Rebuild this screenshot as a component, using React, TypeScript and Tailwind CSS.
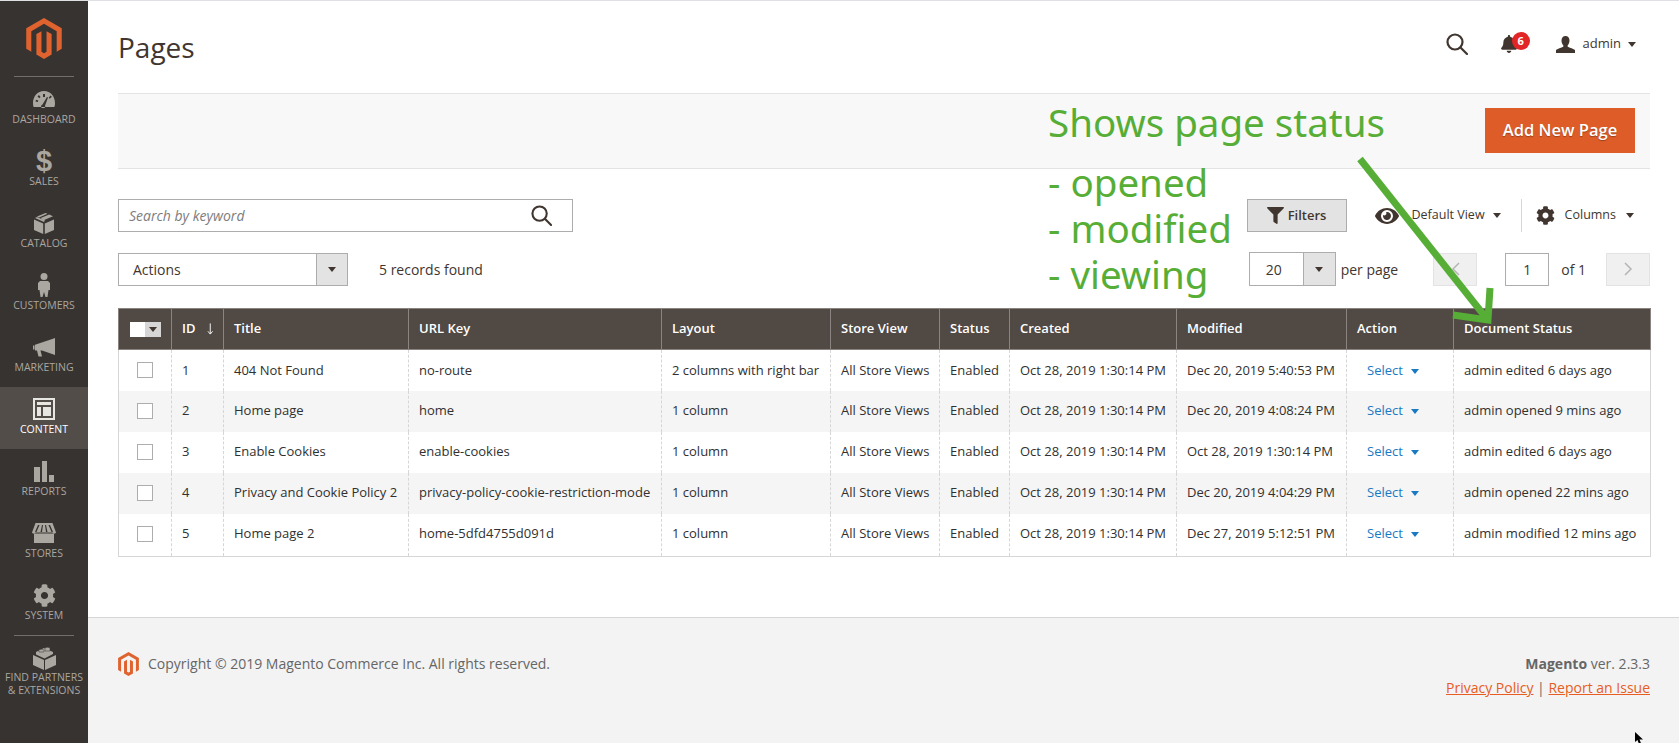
import { FaBell, FaCog, FaEye, FaFilter } from "react-icons/fa";

const MAGENTO =
  "M12 24l-4.455-2.572v-12l2.97-1.715v12.001l1.485.902 1.485-.902V7.713l2.971 1.715v12L12 24zM22.391 6v12l-2.969 1.714V7.713L12 3.43 4.574 7.713v12L1.609 18V6L12 0l10.391 6z";

const rows = [
  ["1", "404 Not Found", "no-route", "2 columns with right bar", "Dec 20, 2019 5:40:53 PM", "admin edited 6 days ago"],
  ["2", "Home page", "home", "1 column", "Dec 20, 2019 4:08:24 PM", "admin opened 9 mins ago"],
  ["3", "Enable Cookies", "enable-cookies", "1 column", "Oct 28, 2019 1:30:14 PM", "admin edited 6 days ago"],
  ["4", "Privacy and Cookie Policy 2", "privacy-policy-cookie-restriction-mode", "1 column", "Dec 20, 2019 4:04:29 PM", "admin opened 22 mins ago"],
  ["5", "Home page 2", "home-5dfd4755d091d", "1 column", "Dec 27, 2019 5:12:51 PM", "admin modified 12 mins ago"],
];

const nav = [
  {
    label: "Dashboard",
    icon: (
      <svg width="24" height="18" viewBox="0 0 24 18" fill="currentColor">
        <path fillRule="evenodd" d="M12 1C5.500 1 1 6.500 1 13c0 1.500.2 3 .7 4h20.600c.5-1 .7-2.500.7-4C23 6.500 18.500 1 12 1zM11 4h2v3h-2zM5.500 6.500l1.400-1.400 1.600 2-1.200 1.100zM3.500 11.500l.5-1.800 2.300.9-.5 1.500zM18.600 5.400l1.300 1.300-2.200 2-1-1zM10.500 14.500l4.500-7.500 1 .5-3 8.200a2 2 0 1 1-2.500-1.200z" />
      </svg>
    ),
  },
  {
    label: "Sales",
    icon: <span className="text-[29px] leading-none font-bold font-['Liberation_Sans',sans-serif]">$</span>,
  },
  {
    label: "Catalog",
    icon: (
      <svg width="20" height="21" viewBox="0 0 20 21" fill="currentColor">
        <path d="M0 6.500l9.200 4V21L0 17zM20 6.500l-9.200 4V21L20 17zM3 3.500L11.500 0l2 .8L5 4.400zM6.700 5L15.200 1.500 19 3.200l-8.800 3.700-1 .5z" />
        <path d="M1 5l2-1 8 3.500-1 1.500z" />
      </svg>
    ),
  },
  {
    label: "Customers",
    icon: (
      <svg width="12" height="24" viewBox="0 0 12 24" fill="currentColor">
        <circle cx="6" cy="3.500" r="3.500" />
        <path d="M2 8h8l2 2v7h-1.500l-1 7H7.500L6 19l-1.500 5h-2l-1-7H0v-7z" />
      </svg>
    ),
  },
  {
    label: "Marketing",
    icon: (
      <svg width="22" height="19" viewBox="0 0 22 19" fill="currentColor">
        <path d="M22 0v17L9 12.500H7.500l1.500 6H5.500L4 12.500H2V6.800l18-6zM0 7.500h1.500v4H0z" />
      </svg>
    ),
  },
  {
    label: "Content",
    active: true,
    icon: (
      <svg width="22" height="22" viewBox="0 0 22 22" fill="currentColor">
        <path fillRule="evenodd" d="M0 0h22v22H0zM2 2v18h18V2zM4 4h14v3H4zM4 9h4v9H4zM10 9h8v9h-8z" />
      </svg>
    ),
  },
  {
    label: "Reports",
    icon: (
      <svg width="20" height="21" viewBox="0 0 20 21" fill="currentColor">
        <path d="M0 6h6v15H0zM8 0h5v21H8zM15 14h5v7h-5z" />
      </svg>
    ),
  },
  {
    label: "Stores",
    icon: (
      <svg width="24" height="20" viewBox="0 0 24 20" fill="currentColor">
        <path fillRule="evenodd" d="M3.500 0h17L24 9.500c-.5 1.500-3 1.500-3.500 0H3.500C3 11 .5 11 0 9.500zM6 2L3 9h1.500l3-7zM10 2L8.500 9H10l1-7zM13 2l1 7h1.500L14 2zM16.500 2l3 7H21l-3-7z" />
        <path d="M2 10.500h20V20H2z" />
      </svg>
    ),
  },
  {
    label: "System",
    icon: <FaCog size={23} />,
  },
];

function Caret({ className }: { className?: string }) {
  return (
    <span
      className={`inline-block w-0 h-0 border-x-[4px] border-x-transparent border-t-[5px] border-t-[#41362f] ${className ?? ""}`}
    />
  );
}

function SearchIcon({ size }: { size: number }) {
  return (
    <svg width={size} height={size} viewBox="0 0 22 22" fill="none" stroke="#41362f" strokeWidth="2.200">
      <circle cx="9" cy="9" r="7.500" />
      <path d="M14.500 14.500L21 21" strokeLinecap="round" />
    </svg>
  );
}

export default function App() {
  return (
    <div className="relative flex h-[743px] w-[1679px] overflow-hidden border-t border-[#dfe0e4] bg-white font-['Open_Sans',sans-serif] text-[14px] text-[#303030]">
      <aside className="flex w-[88px] shrink-0 flex-col items-center bg-[#373330] text-[#aaa6a0]">
        <div className="flex h-[75px] w-full items-start justify-center pt-[17px]">
          <svg width="40" height="41" viewBox="1.600 0 20.800 24" fill="#e0632f">
            <path d={MAGENTO} />
          </svg>
        </div>
        <div className="h-px w-[60px] bg-[#736e69]" />
        <nav className="w-full">
          {nav.map((item) => (
            <div
              key={item.label}
              className={`flex h-[62px] w-full flex-col items-center justify-end pb-[13px] ${
                item.active ? "bg-[#524d49] text-white" : ""
              }`}
            >
              <div className={`flex h-[26px] items-center justify-center ${item.active ? "text-[#e8e6e3]" : ""}`}>
                {item.icon}
              </div>
              <span className="text-[10.500px] leading-[14px] uppercase">{item.label}</span>
            </div>
          ))}
        </nav>
        <div className="h-px w-[60px] bg-[#736e69]" />
        <div className="mt-[11px] flex flex-col items-center">
          <svg width="23" height="23" viewBox="0 0 23 23" fill="currentColor">
            <path d="M0 8l11 5v10L0 18zM23 8l-11 5v10l11-5z" />
            <path d="M3 5l8-4 9 4v2l-8.500 4.500L3 7.500z" />
            <path d="M6 3.500a2.500 1.200 0 0 1 5 0v1.500H6zM12 1.500a2.500 1.200 0 0 1 5 0V4h-5z" stroke="#373330" strokeWidth=".5" />
          </svg>
          <span className="mt-[1px] text-center text-[10.500px] leading-[13px] uppercase whitespace-nowrap">
            Find Partners
            <br />& Extensions
          </span>
        </div>
      </aside>

      <div className="flex min-w-0 flex-1 flex-col">
        <main className="flex-1 pr-[29px] pl-[30px]">
          <header className="flex h-[92px] items-center justify-between">
            <h1 className="text-[28px] leading-none font-normal text-[#41362f]">Pages</h1>
            <div className="flex items-center pr-[14px] pb-[6px] text-[#41362f]">
              <SearchIcon size={22} />
              <div className="relative ml-[32px] flex w-[30px] items-center">
                <FaBell size={18} />
                <span className="absolute top-[-3px] left-[12px] flex h-[18px] w-[18px] items-center justify-center rounded-full bg-[#e22626] text-[11px] font-bold text-white">
                  6
                </span>
              </div>
              <svg width="19" height="17" viewBox="0 0 19 17" fill="currentColor" className="ml-[26px]">
                <path d="M9.500 0C12 0 13.500 1.800 13.500 4.500c0 2-.8 3.800-1.800 4.800v1.400c1 .8 5.300 1.500 7.300 3.300V17H0v-3c2-1.800 6.300-2.500 7.300-3.300V9.300C6.300 8.300 5.500 6.500 5.500 4.500 5.500 1.800 7 0 9.500 0z" />
              </svg>
              <span className="ml-[8px] text-[13px]">admin</span>
              <Caret className="ml-[7px]" />
            </div>
          </header>

          <div className="flex h-[76px] items-center justify-end border-y border-[#e3e3e3] bg-[#f8f8f8] pr-[15px]">
            <button className="mb-[2px] h-[45px] w-[150px] bg-[#dd5c28] text-[16.500px] font-semibold text-white [text-shadow:0_1px_1px_rgba(0,0,0,0.3)]">
              Add New Page
            </button>
          </div>

          <div className="mt-[30px] flex h-[33px] items-center justify-between">
            <div className="flex h-[33px] w-[455px] items-center justify-between border border-[#adadad] pr-[20px] pl-[10px]">
              <span className="text-[#7d7d7d] italic">Search by keyword</span>
              <SearchIcon size={21} />
            </div>
            <div className="flex items-center text-[#41362f]">
              <button className="flex h-[33px] w-[100px] items-center justify-center gap-[4px] border border-[#adadad] bg-[#e3e3e3] text-[13px] font-semibold">
                <FaFilter size={17} /> Filters
              </button>
              <FaEye size={24} className="ml-[28px]" />
              <span className="ml-[13px] text-[12.500px]">Default View</span>
              <Caret className="ml-[8px]" />
              <div className="ml-[20px] h-[33px] w-px bg-[#d6d6d6]" />
              <FaCog size={19} className="ml-[14px]" />
              <span className="ml-[10px] text-[12.500px]">Columns</span>
              <Caret className="mr-[16px] ml-[10px]" />
            </div>
          </div>

          <div className="mt-[20px] flex h-[34px] items-center justify-between">
            <div className="flex items-center">
              <div className="flex h-[33px] w-[230px] border border-[#adadad]">
                <span className="flex-1 self-center pl-[14px] text-[#41362f]">Actions</span>
                <span className="flex w-[31px] items-center justify-center border-l border-[#adadad] bg-[#e3e3e3]">
                  <Caret />
                </span>
              </div>
              <span className="ml-[31px] text-[#41362f]">5 records found</span>
            </div>
            <div className="flex items-center text-[#41362f]">
              <div className="flex h-[34px] w-[87px] border border-[#adadad]">
                <span className="flex-1 self-center pl-[16px]">20</span>
                <span className="flex w-[32px] items-center justify-center border-l border-[#adadad] bg-[#e3e3e3]">
                  <Caret />
                </span>
              </div>
              <span className="ml-[5px]">per page</span>
              <div className="ml-[35px] flex h-[33px] w-[44px] items-center justify-center border border-[#e3e3e3] bg-[#f0f0f0] text-[#b5b5b5]">
                <svg width="9" height="14" viewBox="0 0 9 14" fill="none" stroke="currentColor" strokeWidth="1.500">
                  <path d="M8 1L2 7l6 6" />
                </svg>
              </div>
              <div className="ml-[28px] flex h-[33px] w-[44px] items-center justify-center border border-[#adadad]">1</div>
              <span className="ml-[12px]">of 1</span>
              <div className="ml-[20px] flex h-[33px] w-[44px] items-center justify-center border border-[#e3e3e3] bg-[#f0f0f0] text-[#b5b5b5]">
                <svg width="9" height="14" viewBox="0 0 9 14" fill="none" stroke="currentColor" strokeWidth="1.500">
                  <path d="M1 1l6 6-6 6" />
                </svg>
              </div>
            </div>
          </div>

          <table className="mt-[22px] w-[1532px] table-fixed border-collapse border border-[#d6d6d6] text-[13px]">
            <colgroup>
              <col className="w-[53px]" />
              <col className="w-[52px]" />
              <col className="w-[185px]" />
              <col className="w-[253px]" />
              <col className="w-[169px]" />
              <col className="w-[109px]" />
              <col className="w-[70px]" />
              <col className="w-[167px]" />
              <col className="w-[170px]" />
              <col className="w-[107px]" />
              <col className="w-[197px]" />
            </colgroup>
            <thead>
              <tr className="h-[41px] bg-[#514943] text-left text-white [&>th]:border [&>th]:border-[#8a837f] [&>th]:px-[10px] [&>th]:font-semibold [&>th]:whitespace-nowrap">
                <th>
                  <div className="ml-[1px] flex h-[15px] w-[31px]">
                    <span className="w-[15px] bg-white" />
                    <span className="flex flex-1 items-center justify-center bg-[#d6d6d6]">
                      <Caret />
                    </span>
                  </div>
                </th>
                <th>
                  <div className="flex items-center gap-[11px]">
                    ID
                    <svg width="7" height="12" viewBox="0 0 7 12" fill="none" stroke="currentColor">
                      <path d="M3.500 0v11M1 8.500L3.500 11.500 6 8.500" />
                    </svg>
                  </div>
                </th>
                <th>Title</th>
                <th>URL Key</th>
                <th>Layout</th>
                <th>Store View</th>
                <th>Status</th>
                <th>Created</th>
                <th>Modified</th>
                <th>Action</th>
                <th>Document Status</th>
              </tr>
            </thead>
            <tbody>
              {rows.map((r, i) => (
                <tr
                  key={r[0]}
                  className={`h-[41px] last:h-[43px] [&>td]:border-x [&>td]:border-dashed [&>td]:border-[#d6d6d6] [&>td]:px-[10px] [&>td]:whitespace-nowrap last:[&>td]:pb-[2px] ${
                    i % 2 ? "bg-[#f5f5f5]" : ""
                  }`}
                >
                  <td>
                    <div className="ml-[8px] h-[16px] w-[16px] border border-[#adadad] bg-white" />
                  </td>
                  <td>{r[0]}</td>
                  <td>{r[1]}</td>
                  <td>{r[2]}</td>
                  <td>{r[3]}</td>
                  <td>All Store Views</td>
                  <td>Enabled</td>
                  <td>Oct 28, 2019 1:30:14 PM</td>
                  <td>{r[4]}</td>
                  <td>
                    <span className="ml-[10px] text-[#1979c3]">Select</span>
                    <span className="ml-[8px] inline-block h-0 w-0 border-x-[4px] border-t-[5px] border-x-transparent border-t-[#1979c3] align-middle" />
                  </td>
                  <td>{r[5]}</td>
                </tr>
              ))}
            </tbody>
          </table>
        </main>

        <footer className="flex h-[126px] justify-between border-t border-[#d6d6d6] bg-[#f3f3f3] pt-[34px] pr-[29px] pl-[30px] text-[#666]">
          <div className="flex h-[24px] items-center">
            <svg width="21" height="24" viewBox="1.600 0 20.800 24" fill="#e0632f">
              <path d={MAGENTO} />
            </svg>
            <span className="mb-[2px] ml-[9px]">Copyright © 2019 Magento Commerce Inc. All rights reserved.</span>
          </div>
          <div className="text-right leading-[24px]">
            <div>
              <b className="font-bold">Magento</b> ver. 2.3.3
            </div>
            <div>
              <span className="text-[#e85d22] underline">Privacy Policy</span> |{" "}
              <span className="text-[#e85d22] underline">Report an Issue</span>
            </div>
          </div>
        </footer>
      </div>

      {/* annotation pasted over the screenshot */}
      <div className="absolute top-[98px] left-[1048px] text-[38.500px] leading-[46px] whitespace-nowrap text-[#57ae36] font-['Noto_Sans',sans-serif]">
        <div className="mb-[14px]">Shows page status</div>
        <div>- opened</div>
        <div>- modified</div>
        <div>- viewing</div>
      </div>
      <svg className="absolute top-0 left-0 pointer-events-none" width="1679" height="743" fill="none" stroke="#57ae36" strokeWidth="7">
        <path d="M1360 158L1487 318" />
        <path d="M1453 314L1488 319L1490 287" />
      </svg>
      <svg className="absolute top-[731px] left-[1634px]" width="10" height="12" viewBox="0 0 10 12" fill="#000">
        <path d="M1 0v10l2.500-2 1.500 4 2-.8L5.500 7.500H9z" />
      </svg>
    </div>
  );
}
